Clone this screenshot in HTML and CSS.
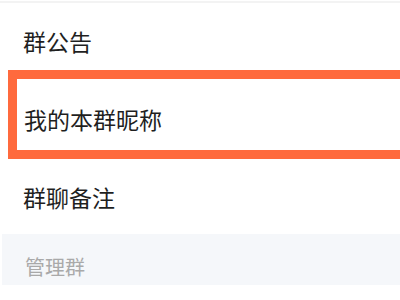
FILE: index.html
```html
<!DOCTYPE html>
<html lang="zh">
<head>
<meta charset="utf-8">
<link rel="stylesheet" href="styles.css">
</head>
<body>
<div class="page">
  <div class="topline"></div>
  <div class="row row-first"><span class="label">群公告</span></div>
  <div class="highlight">
    <div class="row row-mid"><span class="label">我的本群昵称</span></div>
  </div>
  <div class="row row-third"><span class="label">群聊备注</span></div>
  <div class="section"><span class="section-title">管理群</span></div>
</div>
</body>
</html>
```
FILE: styles.css
```css
html, body {
  margin: 0;
  padding: 0;
  background: #ffffff;
}
.page {
  width: 400px;
  height: 300px;
  overflow: hidden;
  font-family: "Noto Sans CJK SC", "Noto Sans", sans-serif;
  display: flex;
  flex-direction: column;
}
.topline {
  height: 2px;
  margin-top: 1px;
  background: #f3f3f3;
  flex: none;
}
.row {
  display: flex;
  align-items: center;
  padding-left: 23px;
  flex: none;
}
.label {
  font-size: 23px;
  color: #1f1f1f;
  line-height: 1;
}
.row-first {
  height: 67px;
  padding-top: 10px;
  box-sizing: border-box;
}
.highlight {
  margin-left: 8px;
  width: 420px;
  border-top: 9px solid #ff6a3d;
  border-bottom: 9px solid #ff6a3d;
  border-left: 9px solid #ff6a3d;
  flex: none;
}
.row-mid {
  height: 71px;
  padding-left: 7px;
  padding-top: 9px;
  box-sizing: border-box;
}
.row-third {
  height: 75px;
  padding-top: 2px;
  box-sizing: border-box;
}
.section {
  margin-left: 2px;
  height: 51px;
  background: #f5f7fa;
  display: flex;
  align-items: flex-end;
  padding-left: 23px;
  padding-bottom: 8px;
  box-sizing: border-box;
  flex: none;
}
.section-title {
  font-size: 20px;
  line-height: 1;
  color: #a9a9a9;
}
```
